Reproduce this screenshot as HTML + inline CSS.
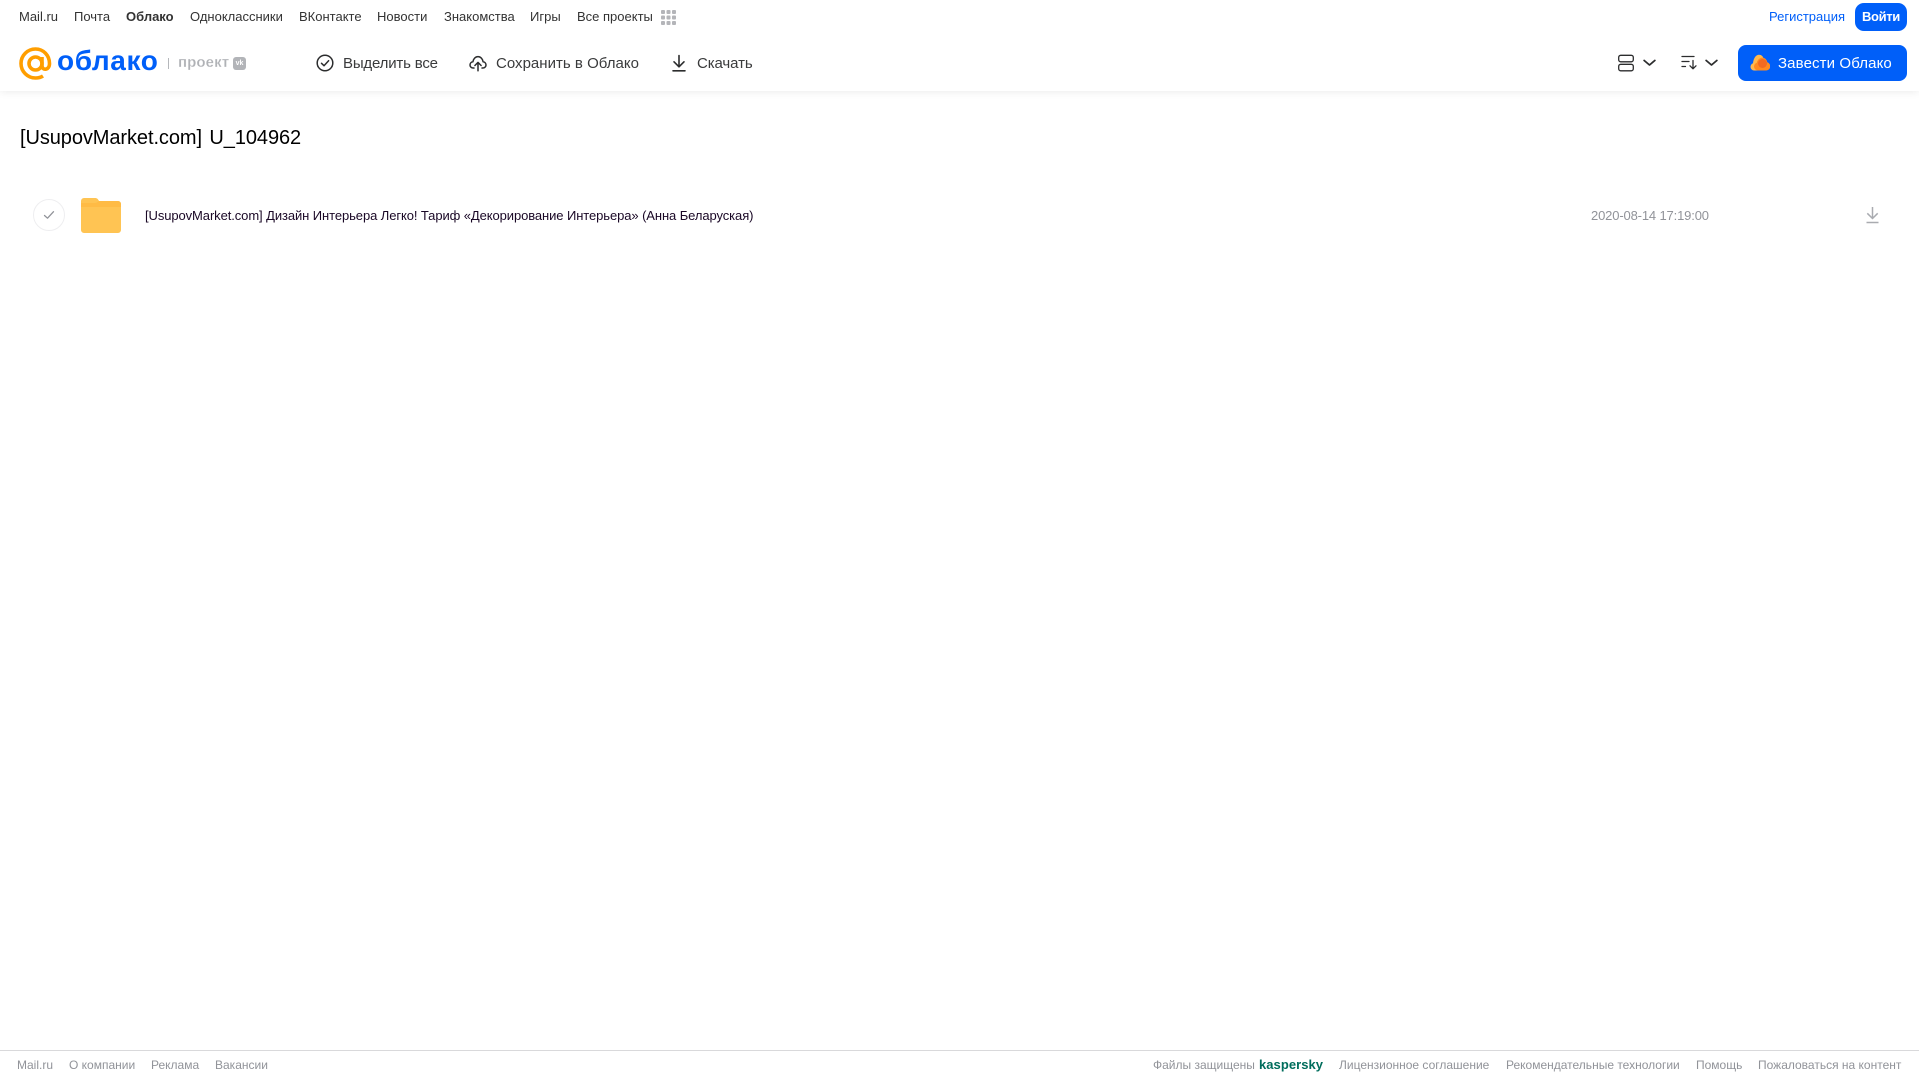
<!DOCTYPE html>
<html lang="ru"><head><meta charset="utf-8"><title>Облако</title>
<style>
html,body{margin:0;padding:0;background:#fff}
body{width:1919px;height:1079px;position:relative;overflow:hidden;font-family:"Liberation Sans",Arial,sans-serif}
.t{position:absolute;white-space:nowrap;line-height:20px}
.n{top:7px;font-size:13px;color:#333}
.b{top:54px;font-size:15px;color:#3a3b3c}
.f{top:1055px;font-size:12px;color:#919399}
svg{position:absolute;display:block}
</style></head><body>
<div style="position:absolute;left:0;top:0;width:1919px;height:91px;background:#fff;box-shadow:0 1px 8px rgba(0,0,0,.08)"></div>

<span class="t n" style="left:19px">Mail.ru</span>
<span class="t n" style="left:74px">Почта</span>
<span class="t n" style="left:126px;font-weight:bold">Облако</span>
<span class="t n" style="left:190px">Одноклассники</span>
<span class="t n" style="left:299px">ВКонтакте</span>
<span class="t n" style="left:377px">Новости</span>
<span class="t n" style="left:444px">Знакомства</span>
<span class="t n" style="left:530px">Игры</span>
<span class="t n" style="left:577px">Все проекты</span>
<svg style="left:661px;top:10px" width="15" height="15" fill="#b4b5b9"><rect width="4" height="4" rx="1"/><rect x="5.500" width="4" height="4" rx="1"/><rect x="11" width="4" height="4" rx="1"/><rect y="5.500" width="4" height="4" rx="1"/><rect x="5.500" y="5.500" width="4" height="4" rx="1"/><rect x="11" y="5.500" width="4" height="4" rx="1"/><rect y="11" width="4" height="4" rx="1"/><rect x="5.500" y="11" width="4" height="4" rx="1"/><rect x="11" y="11" width="4" height="4" rx="1"/></svg>

<span class="t" style="left:1769px;top:7px;font-size:13px;color:#005ff9">Регистрация</span>
<div style="position:absolute;left:1855px;top:3px;width:52px;height:28px;background:#005ff9;border-radius:9px"></div>
<span class="t" style="left:1862px;top:7px;font-size:13px;color:#fff;font-weight:bold;letter-spacing:-.35px">Войти</span>

<!-- logo -->
<svg style="left:19px;top:47px" width="33" height="33" viewBox="0 0 33 33" fill="none" stroke="#ff9e00" stroke-width="3.600"><circle cx="16.500" cy="16.500" r="6.500"/><path d="M23 10v8.500c0 5.500 7.500 5 7.500-2C30.500 8.500 24.500 2 16.500 2S2 8.500 2 16.500 8.500 31 16.500 31c3 0 5.500-.7 7.500-2"/></svg>
<span class="t" style="left:57px;top:45px;font-size:28px;line-height:32px;font-weight:bold;color:#005ff9;letter-spacing:.6px">облако</span>
<div style="position:absolute;left:168px;top:58px;width:1px;height:11px;background:#b5b7bb"></div>
<span class="t" style="left:178px;top:53px;font-size:15px;font-weight:bold;color:#b0b2b6;letter-spacing:.1px;-webkit-text-stroke:.2px #fff">проект</span>
<div style="position:absolute;left:233px;top:57px;width:13px;height:13px;background:#b2b4b8;border-radius:3px;color:#fff;font:bold 7px/13px 'Liberation Sans',sans-serif;text-align:center">vk</div>

<!-- toolbar -->
<svg style="left:316px;top:54px" width="18" height="18" viewBox="0 0 18 18" fill="none" stroke="#2c2d2e" stroke-width="1.500"><circle cx="9" cy="9" r="7.800"/><path d="M5.500 9.300l2.500 2.400 4.600-5" stroke-linecap="round" stroke-linejoin="round"/></svg>
<span class="t b" style="left:343px;letter-spacing:-.18px">Выделить все</span>
<svg style="left:469px;top:54px" width="18" height="18" viewBox="0 0 18 18" fill="none" stroke="#2c2d2e" stroke-width="1.500" stroke-linecap="round" stroke-linejoin="round"><path d="M5 14H4.200C2.300 14 1 12.600 1 11c0-1.700 1.200-3 2.900-3.200C4.300 4.900 6.400 2.600 9 2.600s4.700 2.300 5.100 5.200C15.800 8 17 9.300 17 11c0 1.600-1.300 3-3.200 3H13"/><path d="M9 16.800V8.500M5.900 11.500L9 8.400l3.100 3.100"/></svg>
<span class="t b" style="left:496px;letter-spacing:.02px">Сохранить в Облако</span>
<svg style="left:671px;top:54px" width="16" height="18" viewBox="0 0 16 18" fill="none" stroke="#2c2d2e" stroke-width="1.600" stroke-linecap="round" stroke-linejoin="round"><path d="M8 1.500v11M3 7.800l5 5 5-5M2 16.800h12"/></svg>
<span class="t b" style="left:697px;letter-spacing:-.1px">Скачать</span>

<svg style="left:1618px;top:54px" width="16" height="18" viewBox="0 0 16 18" fill="none" stroke="#2c2d2e" stroke-width="1.300"><rect x=".7" y="1.300" width="14.600" height="6.500" rx="2"/><rect x=".7" y="10.300" width="14.600" height="6.500" rx="2"/></svg>
<svg style="left:1643px;top:59px" width="13" height="8" fill="none" stroke="#2c2d2e" stroke-width="1.800" stroke-linecap="round" stroke-linejoin="round"><path d="M1.200 1.500L6.500 6l5.300-4.500"/></svg>
<svg style="left:1681px;top:55px" width="17" height="15" fill="none" stroke="#2c2d2e" stroke-width="1.300" stroke-linecap="round" stroke-linejoin="round"><path d="M1 1.500h12M1 6.500h7M1 11.500h3.500M12 5.500v8M9 10.800l3 3 3-3"/></svg>
<svg style="left:1705px;top:59px" width="13" height="8" fill="none" stroke="#2c2d2e" stroke-width="1.800" stroke-linecap="round" stroke-linejoin="round"><path d="M1.200 1.500L6.500 6l5.300-4.500"/></svg>

<div style="position:absolute;left:1738px;top:45px;width:169px;height:36px;background:#005ff9;border-radius:8px"></div>
<svg style="left:1750px;top:54px" width="20" height="17" viewBox="0 0 20 17"><path d="M4 16.500a3.700 3.700 0 0 1-1-7.200C3.600 4 6 .8 9 .8c2.500 0 4 1.600 4.500 3.700L12 16.500z" fill="#ffb84d"/><path d="M8 16.500a4 4 0 0 1-1.200-7.800C7.400 5.800 9.800 3.600 12.300 3.600c2.400 0 4.500 1.900 5 4.700a4.200 4.200 0 0 1-1 8.200z" fill="#ff8a1f"/><circle cx="12.500" cy="9.500" r="4.500" fill="#f26a22"/></svg>
<span class="t" style="left:1778px;top:54px;font-size:15px;color:#fff;letter-spacing:.12px">Завести Облако</span>

<!-- content -->
<span class="t" style="left:20px;top:126px;font-size:20px;line-height:24px;color:#000;letter-spacing:-.08px;word-spacing:2px">[UsupovMarket.com] U_104962</span>

<div style="position:absolute;left:33px;top:199px;width:30px;height:30px;border:1px solid #eeeef0;border-radius:50%"></div>
<svg style="left:43px;top:210px" width="12" height="10" fill="none" stroke="#919399" stroke-width="1.300" stroke-linecap="round" stroke-linejoin="round"><path d="M1.500 5.500l3 2.700 6-6.500"/></svg>

<svg style="left:81px;top:198px" width="40" height="35" viewBox="0 0 40 35"><path d="M3 0h11c2 0 3 1 4 3h19a3 3 0 0 1 3 3v26a3 3 0 0 1-3 3H3a3 3 0 0 1-3-3V3a3 3 0 0 1 3-3z" fill="#ffc453"/><path d="M0 9h40v-3a3 3 0 0 0-3-3H18l-1 .8c-1 .8-2 1.200-3 1.200H0z" fill="#ffbb45"/></svg>

<span class="t" style="left:145px;top:206px;font-size:13px;color:#1a0826;letter-spacing:-.09px">[UsupovMarket.com] Дизайн Интерьера Легко! Тариф «Декорирование Интерьера» (Анна Беларуская)</span>
<span class="t" style="left:1591px;top:206px;font-size:13px;color:#919399;letter-spacing:-.15px">2020-08-14 17:19:00</span>
<svg style="left:1865px;top:206px" width="15" height="18" viewBox="0 0 15 18" fill="none" stroke="#a9abb0" stroke-width="1.500"><path d="M7.500 1v11.500M2.300 7.300l5.200 5.200 5.200-5.200M1.500 16.500h12"/></svg>

<!-- footer -->
<div style="position:absolute;left:0;top:1050px;width:1919px;height:1px;background:#d9d9db"></div>
<span class="t f" style="left:17px">Mail.ru</span>
<span class="t f" style="left:69px">О компании</span>
<span class="t f" style="left:151px">Реклама</span>
<span class="t f" style="left:215px">Вакансии</span>
<span class="t f" style="left:1153px">Файлы защищены</span>
<span class="t" style="left:1259px;top:1055px;font-size:13px;font-weight:bold;color:#006d5c;letter-spacing:.05px">kaspersky</span>
<span class="t f" style="left:1339px">Лицензионное соглашение</span>
<span class="t f" style="left:1506px">Рекомендательные технологии</span>
<span class="t f" style="left:1696px">Помощь</span>
<span class="t f" style="left:1758px">Пожаловаться на контент</span>
</body></html>
